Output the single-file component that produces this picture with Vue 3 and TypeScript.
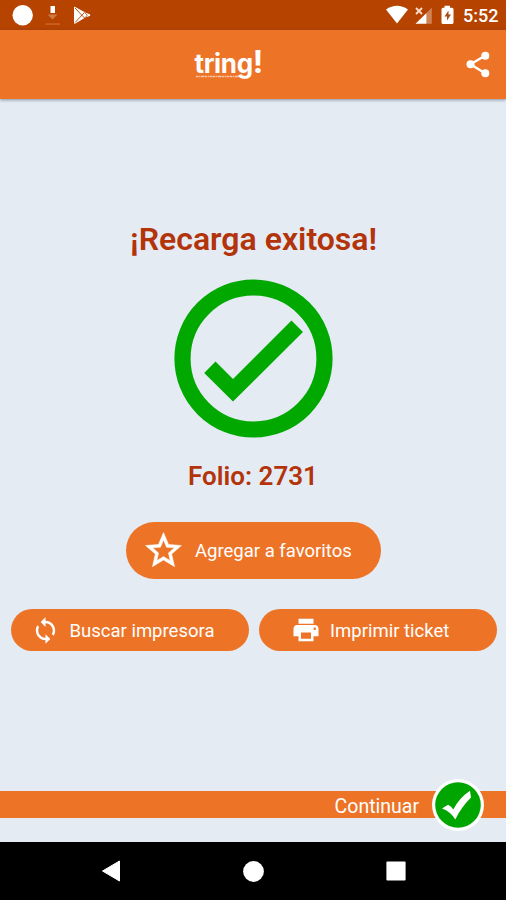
<script setup lang="ts">
const title = '¡Recarga exitosa!'
const folio = 2731
const clock = '5:52'
</script>

<template>
  <div class="screen">
    <div class="status">
      <svg class="notif" width="100" height="30" viewBox="0 0 100 30" fill="#fff">
        <circle cx="22.7" cy="15.2" r="10.2" />
        <path d="M50.500 6h4.500v7h-4.500z" />
        <path d="M47.500 14.500h10l-5 5z" fill="#cf7b45" />
        <path d="M45.500 23.300h14.500v1.500h-14.500z" fill="#cf6628" />
        <path d="M74 7.500q0-1.200 1.200-.6l10.600 5.800 4 1.500q1.200.9 0 1.900l-4 1.200-10.400 6.300q-1.400.5-1.400-.8z" />
        <path d="M75 8l9.500 10M75 22.500l9.500-10" stroke="#b64300" stroke-width=".9" />
        <path d="M85 12.800l2.300 2.400-2.300 2.400" stroke="#b64300" stroke-width=".8" fill="none" />
      </svg>
      <div class="system">
        <svg width="72" height="30" viewBox="0 0 72 30" fill="#fff">
          <path d="M0 9.500Q11 2 22 9.500L11 23.600z" />
          <path d="M45.800 7.500v16.300h-5.300V13z" fill="#cf8457" />
          <path d="M40.500 13v10.800h-11z" />
          <path d="M30 8l6 6M36 8l-6 6" stroke="#f8dccb" stroke-width="1.900" />
          <path d="M58.500 5.800h5.500v2h2q1.500 0 1.500 1.500v13.200q0 1.500-1.500 1.500h-9q-1.500 0-1.500-1.500V9.300q0-1.500 1.500-1.500h1.500z" />
          <path d="M62.500 10.500l-4 6h2.500v4l4-6h-2.500z" fill="#a84b18" />
        </svg>
        <span class="clock">{{ clock }}</span>
      </div>
    </div>

    <header class="appbar">
      <div class="logo">
        <span class="word">tring</span><span class="bang">!</span>
        <svg class="tagline" width="46" height="3" viewBox="0 0 46 3">
          <path d="M0 1.500h46" stroke="#fff" stroke-opacity=".6" stroke-width="1.600" stroke-dasharray="2.400 .7 1.300 .6 3 .5" />
        </svg>
      </div>
      <svg class="share" width="24" height="27" viewBox="0 0 24 27" fill="#fff">
        <path d="M19 4.800L4.500 13.300 19 22.200" fill="none" stroke="#fff" stroke-width="2.400" />
        <circle cx="4.500" cy="13.300" r="4" />
        <circle cx="19.300" cy="4.800" r="4" />
        <circle cx="19.300" cy="22.200" r="4" />
      </svg>
    </header>

    <main class="content">
      <h1>{{ title }}</h1>
      <svg class="success" width="159" height="159" viewBox="0 0 159 159">
        <circle cx="79.500" cy="79.500" r="71" fill="none" stroke="#00a800" stroke-width="16.200" />
        <path d="M30.200 94L41.500 82.500 59 100 117.500 41.500 129 53 59 122.500z" fill="#00a800" />
      </svg>
      <h2>Folio: {{ folio }}</h2>
      <button class="pill favorite">
        <svg width="43" height="43" viewBox="0 0 24 24" fill="#fff" stroke="#fff" stroke-width=".3">
          <path d="M22 9.240l-7.190-.62L12 2 9.190 8.630 2 9.240l5.460 4.730L5.820 21 12 17.270 18.180 21l-1.630-7.030L22 9.240zM12 15.400l-3.760 2.270 1-4.280-3.320-2.880 4.380-.38L12 6.100l1.710 4.040 4.380.38-3.320 2.880 1 4.280L12 15.400z" />
        </svg>
        <span>Agregar a favoritos</span>
      </button>
      <div class="actions">
        <button class="pill search">
          <svg width="29" height="29" viewBox="0 0 24 24" fill="#fff">
            <path d="M12 4V1L8 5l4 4V6c3.310 0 6 2.690 6 6 0 1.010-.25 1.970-.7 2.800l1.460 1.460C19.540 15.030 20 13.570 20 12c0-4.420-3.580-8-8-8zm0 14c-3.310 0-6-2.690-6-6 0-1.010.25-1.970.7-2.800L5.240 7.740C4.460 8.970 4 10.430 4 12c0 4.420 3.580 8 8 8v3l4-4-4-4v3z" />
          </svg>
          <span>Buscar impresora</span>
        </button>
        <button class="pill print">
          <svg width="30" height="30" viewBox="0 0 24 24" fill="#fff">
            <path d="M19 8H5c-1.660 0-3 1.340-3 3v6h4v4h12v-4h4v-6c0-1.660-1.340-3-3-3zm-3 11H8v-5h8v5zm3-7c-.55 0-1-.45-1-1s.45-1 1-1 1 .45 1 1-.45 1-1 1zm-1-9H6v4h12V3z" />
          </svg>
          <span>Imprimir ticket</span>
        </button>
      </div>
    </main>

    <footer class="continue">
      <span>Continuar</span>
      <svg width="54" height="54" viewBox="0 0 54 54">
        <circle cx="27" cy="27" r="26" fill="#fff" />
        <circle cx="27" cy="27" r="22.800" fill="#00a500" />
        <path d="M11 30.500l6-3.800q3.500 1.500 5.300 4.800Q28 20 39 12.700l1 6.800Q30 29.500 24.300 41.500q-4.800-8-13.300-11z" fill="#fff" />
      </svg>
    </footer>

    <nav class="navbar">
      <svg width="20" height="22" viewBox="0 0 20 22"><path d="M18.500 1v20L1.500 11z" fill="#fff" stroke="#fff" stroke-linejoin="round" /></svg>
      <svg width="21" height="21" viewBox="0 0 21 21"><circle cx="10.500" cy="10.500" r="10.400" fill="#fff" /></svg>
      <svg width="20" height="20" viewBox="0 0 20 20"><rect x=".4" y=".4" width="19.200" height="19.200" rx="1" fill="#fff" /></svg>
    </nav>
  </div>
</template>

<style>
body {
  margin: 0;
}
</style>

<style scoped>
.screen {
  width: 506px;
  height: 900px;
  display: flex;
  flex-direction: column;
  overflow: hidden;
  background: #e4ebf3;
  font-family: Roboto, "Liberation Sans", sans-serif;
}
svg {
  display: block;
  flex: none;
}
.status {
  height: 30px;
  flex: none;
  display: flex;
  justify-content: space-between;
  background: #b64300;
}
.system {
  display: flex;
  width: 120px;
}
.clock {
  margin-left: 5px;
  color: #fff;
  font-size: 18px;
  font-weight: 500;
  line-height: 32px;
}
.appbar {
  height: 69px;
  flex: none;
  display: flex;
  align-items: center;
  justify-content: space-between;
  box-sizing: border-box;
  padding: 0 16.500px 0 194.500px;
  background: #ed7427;
  box-shadow: 0 1px 3px rgba(60, 70, 90, 0.55);
}
.logo {
  position: relative;
  display: flex;
  align-items: baseline;
  height: 46px;
  color: #fff;
  font-family: Inter, sans-serif;
  line-height: 40px;
}
.word {
  font-size: 26px;
  font-weight: 700;
  letter-spacing: -0.35px;
}
.bang {
  font-size: 31px;
  font-weight: 700;
  letter-spacing: -1px;
}
.tagline {
  position: absolute;
  left: 1px;
  top: 33px;
}
.share {
  margin-bottom: 1px;
}
.content {
  flex: 1;
  display: flex;
  flex-direction: column;
  align-items: center;
  padding-top: 120px;
}
h1,
h2 {
  margin: 0;
  color: #b3330a;
  font-weight: 600;
}
h1 {
  font-size: 32px;
  line-height: 40px;
  padding-left: 1px;
}
.success {
  margin-top: 20px;
  margin-left: 1px;
}
h2 {
  margin-top: 22px;
  font-size: 26px;
  line-height: 32px;
}
.pill {
  display: flex;
  align-items: center;
  box-sizing: border-box;
  border: 0;
  padding: 0;
  border-radius: 30px;
  background: #ed7427;
  color: #fff;
  font-family: inherit;
  font-size: 18.500px;
  white-space: nowrap;
}
.favorite {
  width: 255px;
  height: 57px;
  margin-top: 30px;
  margin-left: 1px;
  padding-left: 16px;
  gap: 10px;
}
.actions {
  display: flex;
  gap: 10px;
  margin-top: 30px;
  margin-left: 1px;
}
.actions .pill {
  width: 238px;
  height: 42px;
}
.actions span {
  padding-top: 1px;
}
.actions .search {
  padding-left: 20px;
  gap: 10px;
}
.actions .print {
  padding-left: 32.500px;
  gap: 9px;
}
.continue {
  height: 27px;
  flex: none;
  display: flex;
  align-items: center;
  justify-content: flex-end;
  margin-bottom: 24px;
  padding-right: 21px;
  gap: 12px;
  background: #ed7427;
  color: #fff;
  font-size: 19.500px;
}
.continue span {
  padding-top: 3px;
}
.navbar {
  height: 58px;
  flex: none;
  display: flex;
  align-items: center;
  justify-content: space-between;
  box-sizing: border-box;
  padding: 0 100px 0 101px;
  background: #000;
}
</style>
